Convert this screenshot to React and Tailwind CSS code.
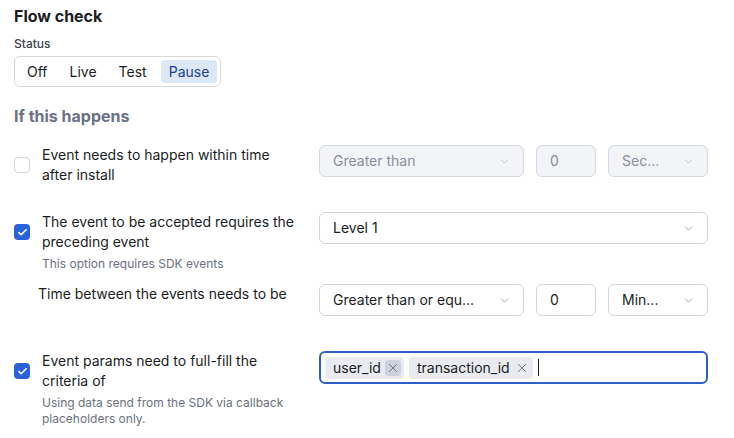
import React, { useState } from 'react';
import { ChevronDown, X, Check } from 'lucide-react';

const Select = ({ value, disabled, className = '' }) => (
  <div
    className={`flex items-center justify-between h-8 pl-[13px] pr-3 rounded-md border text-sm ${
      disabled ? 'bg-[#f3f4f8] border-[#d5d8e0] text-[#8a8f9c]' : 'bg-white border-[#d3d6de] text-[#1a1d24]'
    } ${className}`}
  >
    <span className="truncate">{value}</span>
    <ChevronDown size={13} strokeWidth={1.5} className={disabled ? 'text-[#b5b9c4]' : 'text-[#8a8f9c]'} />
  </div>
);

const NumberBox = ({ value, disabled }) => (
  <div
    className={`flex items-center h-8 w-[60px] px-[13px] rounded-md border text-sm ${
      disabled ? 'bg-[#f3f4f8] border-[#d5d8e0] text-[#8a8f9c]' : 'bg-white border-[#d3d6de] text-[#1a1d24]'
    }`}
  >
    {value}
  </div>
);

const Checkbox = ({ checked }) =>
  checked ? (
    <span className="flex items-center justify-center w-4 h-4 shrink-0 rounded-[4px] bg-[#2a62dc]">
      <Check size={11} strokeWidth={3.5} className="text-white" />
    </span>
  ) : (
    <span className="w-4 h-4 shrink-0 rounded-[4px] border border-[#cfd2da] bg-white" />
  );

const TripleControl = ({ first, num, unit, disabled }) => (
  <div className="flex gap-3">
    <Select value={first} disabled={disabled} className="w-[205px]" />
    <NumberBox value={num} disabled={disabled} />
    <Select value={unit} disabled={disabled} className="w-[100px]" />
  </div>
);

const Row = ({ checked, label, helper, children, className = '' }) => (
  <div className={`grid grid-cols-[305px_1fr] ${className}`}>
    <div className="flex flex-col">
      <div className="flex items-center gap-3">
        <Checkbox checked={checked} />
        <span className="text-sm leading-5 text-[#1a1d24] w-[252px]">{label}</span>
      </div>
      {helper && <p className="mt-1 pl-7 text-xs leading-4 text-[#6b7180] w-[270px]">{helper}</p>}
    </div>
    <div>{children}</div>
  </div>
);

export default function App() {
  const [status, setStatus] = useState('Pause');
  const tags = ['user_id', 'transaction_id'];

  return (
    <div
      className="w-[734px] h-[438px] bg-white pl-[14px] pr-[26px] pt-1 overflow-hidden"
      style={{ fontFamily: 'Inter, "Noto Sans", sans-serif' }}
    >
      <h1 className="text-base leading-6 font-bold text-[#1a1d24]">Flow check</h1>
      <p className="mt-2 text-xs leading-4 font-medium text-[#3d4250]">Status</p>
      <div className="mt-1 inline-flex items-center gap-[6px] p-[3px] pl-1 border border-[#d6d9e0] rounded-md">
        {['Off', 'Live', 'Test', 'Pause'].map(s => (
          <button
            key={s}
            onClick={() => setStatus(s)}
            className={`h-[23px] px-2 rounded text-sm ${
              status === s ? 'bg-[#dce7f8] text-[#1f3f8c]' : 'text-[#1a1d24]'
            }`}
          >
            {s}
          </button>
        ))}
      </div>

      <h2 className="mt-[17px] text-base leading-6 font-bold text-[#6b7288]">If this happens</h2>

      <Row className="mt-[17px]" label="Event needs to happen within time after install">
        <TripleControl first="Greater than" num="0" unit="Sec..." disabled />
      </Row>

      <Row className="mt-[27px]" checked label="The event to be accepted requires the preceding event" helper="This option requires SDK events">
        <Select value="Level 1" />
      </Row>

      <div className="mt-3 grid grid-cols-[305px_1fr]">
        <span className="pl-6 text-sm leading-5 text-[#1a1d24] h-8 flex items-start">
          Time between the events needs to be
        </span>
        <TripleControl first="Greater than or equ..." num="0" unit="Min..." />
      </div>

      <Row
        className="mt-[35px]"
        checked
        label="Event params need to full-fill the criteria of"
        helper="Using data send from the SDK via callback placeholders only."
      >
        <div className="flex items-center gap-[5px] h-[33px] px-[4px] rounded-md border-2 border-[#2f5fc6] bg-white">
          {tags.map((t, i) => (
            <span key={t} className="flex items-center gap-1 h-[22px] pl-2 pr-[3px] rounded bg-[#e9ebf1] text-sm text-[#1a1d24]">
              {t}
              <span className={`flex items-center justify-center w-4 h-4 rounded-[3px] ${i === 0 ? 'bg-[#cdd1dc]' : ''}`}>
                <X size={14} strokeWidth={1.4} className="text-[#5d6270]" />
              </span>
            </span>
          ))}
          <span className="w-px h-[17px] bg-[#1a1d24]" />
        </div>
      </Row>
    </div>
  );
}
